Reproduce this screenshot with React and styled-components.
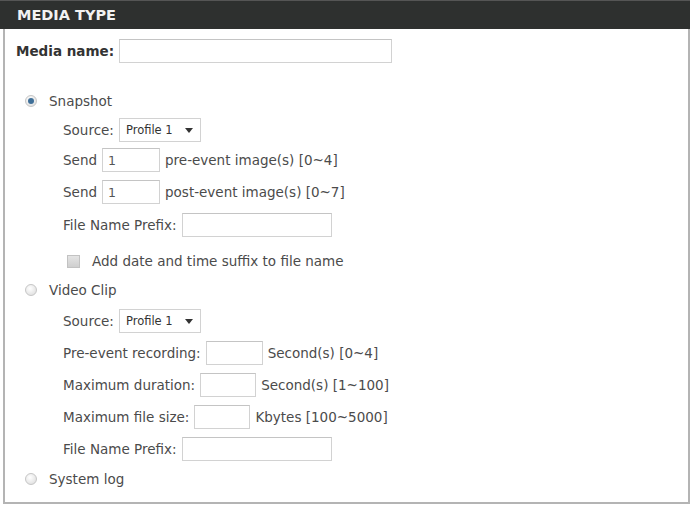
import React from "react";
import styled, { createGlobalStyle } from "styled-components";

const GlobalStyle = createGlobalStyle`
  body {
    margin: 0;
    background: #ffffff;
    font-family: "DejaVu Sans", sans-serif;
  }
`;

const Panel = styled.div`
  width: 690px;
`;

const Header = styled.div`
  height: 29px;
  background: #2e302f;
  border-top: 1px solid #555;
  box-sizing: border-box;
  display: flex;
  align-items: center;
  padding-left: 17px;
  color: #f2f2f2;
  font-weight: bold;
  font-size: 14.5px;
`;

const Body = styled.div`
  margin-left: 3px;
  border-left: 2px solid #b4b4b4;
  border-right: 2px solid #b4b4b4;
  border-bottom: 2px solid #b4b4b4;
  padding: 10px 0 11px 0;
  display: flex;
  flex-direction: column;
  color: #4b4b4b;
  font-size: 13.5px;
`;

const Row = styled.div`
  display: flex;
  align-items: center;
  height: 24px;
  gap: ${(p) => (p.$tight ? 0 : 5)}px;
  margin-top: ${(p) => p.$gap || 0}px;
  padding-left: ${(p) => p.$indent || 0}px;
`;

const BoldLabel = styled.span`
  font-weight: bold;
  color: #333;
  font-size: 13.5px;
`;

const Label = styled.span`
  white-space: nowrap;
`;

const TextBox = styled.input`
  width: ${(p) => p.$w}px;
  height: 24px;
  box-sizing: border-box;
  border: 1px solid #d2d2d2;
  border-top-color: #c4c4c4;
  background: #fff;
  padding: 0 5px;
  font-family: inherit;
  font-size: 12.5px;
  color: #555;
  outline: none;
`;

const Radio = styled.span`
  width: 12px;
  height: 12px;
  border-radius: 50%;
  box-sizing: border-box;
  border: 1px solid #c6c6c6;
  background: radial-gradient(circle at 40% 35%, #ffffff, #d9d9d9);
  display: inline-flex;
  align-items: center;
  justify-content: center;
  margin-right: 12px;

  &::after {
    content: "";
    width: 6px;
    height: 6px;
    border-radius: 50%;
    background: ${(p) => (p.$checked ? "#3f6f98" : "transparent")};
  }
`;

const Check = styled.span`
  width: 13px;
  height: 13px;
  box-sizing: border-box;
  border: 1px solid #c2c2c2;
  background: linear-gradient(#e4e4e4, #cfcfcf);
  margin-right: 12px;
`;

const SelectBox = styled.div`
  width: 82px;
  height: 24px;
  box-sizing: border-box;
  border: 1px solid #d2d2d2;
  background: #fff;
  display: flex;
  align-items: center;
  justify-content: space-between;
  padding: 0 7px 0 6px;
  font-size: 11.5px;
  color: #333;
`;

const Caret = styled.span`
  width: 0;
  height: 0;
  border-left: 4px solid transparent;
  border-right: 4px solid transparent;
  border-top: 5px solid #333;
`;

const Select = ({ value }) => (
  <SelectBox>
    <span>{value}</span>
    <Caret />
  </SelectBox>
);

const App = () => {
  return (
    <>
      <GlobalStyle />
      <Panel>
        <Header>MEDIA TYPE</Header>
        <Body>
          <Row $indent={11}>
            <BoldLabel>Media name:</BoldLabel>
            <TextBox $w={273} />
          </Row>

          <Row $indent={20} $gap={26} $tight>
            <Radio $checked />
            <Label>Snapshot</Label>
          </Row>
          <Row $indent={58} $gap={5}>
            <Label>Source:</Label>
            <Select value="Profile 1" />
          </Row>
          <Row $indent={58} $gap={6}>
            <Label>Send</Label>
            <TextBox $w={58} defaultValue="1" />
            <Label>pre-event image(s) [0~4]</Label>
          </Row>
          <Row $indent={58} $gap={8}>
            <Label>Send</Label>
            <TextBox $w={58} defaultValue="1" />
            <Label>post-event image(s) [0~7]</Label>
          </Row>
          <Row $indent={58} $gap={9}>
            <Label>File Name Prefix:</Label>
            <TextBox $w={150} />
          </Row>
          <Row $indent={62} $gap={12} $tight>
            <Check />
            <Label>Add date and time suffix to file name</Label>
          </Row>

          <Row $indent={20} $gap={5} $tight>
            <Radio />
            <Label>Video Clip</Label>
          </Row>
          <Row $indent={58} $gap={7}>
            <Label>Source:</Label>
            <Select value="Profile 1" />
          </Row>
          <Row $indent={58} $gap={8}>
            <Label>Pre-event recording:</Label>
            <TextBox $w={57} />
            <Label>Second(s) [0~4]</Label>
          </Row>
          <Row $indent={58} $gap={8}>
            <Label>Maximum duration:</Label>
            <TextBox $w={56} />
            <Label>Second(s) [1~100]</Label>
          </Row>
          <Row $indent={58} $gap={8}>
            <Label>Maximum file size:</Label>
            <TextBox $w={56} />
            <Label>Kbytes [100~5000]</Label>
          </Row>
          <Row $indent={58} $gap={8}>
            <Label>File Name Prefix:</Label>
            <TextBox $w={150} />
          </Row>

          <Row $indent={20} $gap={6} $tight>
            <Radio />
            <Label>System log</Label>
          </Row>
        </Body>
      </Panel>
    </>
  );
};

export default App;
